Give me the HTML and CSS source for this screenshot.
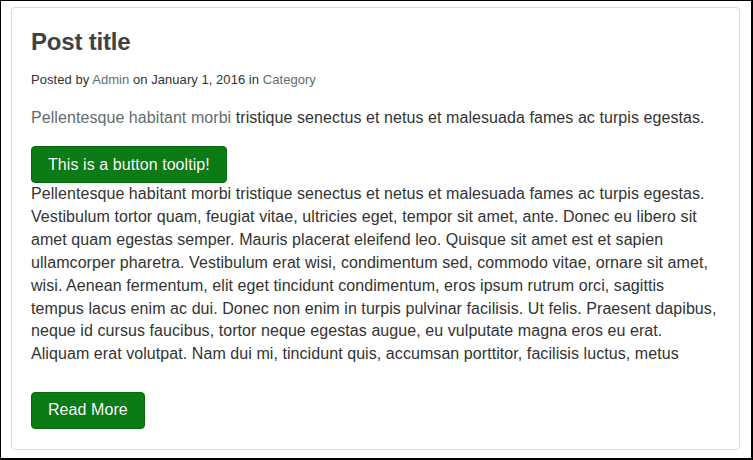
FILE: index.html
```html
<!DOCTYPE html>
<html>
<head>
<meta charset="utf-8">
<link rel="stylesheet" href="styles.css">
</head>
<body>
<div class="frame">
  <article class="card">
    <h2 class="title">Post title</h2>
    <p class="meta">Posted by <a href="#">Admin</a> on January 1, 2016 in <a href="#">Category</a></p>
    <p class="lead"><a href="#">Pellentesque habitant morbi</a> tristique senectus et netus et malesuada fames ac turpis egestas.</p>
    <button class="btn">This is a button tooltip!</button>
    <p class="body">Pellentesque habitant morbi tristique senectus et netus et malesuada fames ac turpis egestas. Vestibulum tortor quam, feugiat vitae, ultricies eget, tempor sit amet, ante. Donec eu libero sit amet quam egestas semper. Mauris placerat eleifend leo. Quisque sit amet est et sapien ullamcorper pharetra. Vestibulum erat wisi, condimentum sed, commodo vitae, ornare sit amet, wisi. Aenean fermentum, elit eget tincidunt condimentum, eros ipsum rutrum orci, sagittis tempus lacus enim ac dui. Donec non enim in turpis pulvinar facilisis. Ut felis. Praesent dapibus, neque id cursus faucibus, tortor neque egestas augue, eu vulputate magna eros eu erat. Aliquam erat volutpat. Nam dui mi, tincidunt quis, accumsan porttitor, facilisis luctus, metus</p>
    <button class="btn">Read More</button>
  </article>
</div>
</body>
</html>
```

FILE: styles.css
```css
html, body {
  margin: 0;
  padding: 0;
  background: #fff;
}
.frame {
  box-sizing: border-box;
  width: 753px;
  height: 460px;
  border-style: solid;
  border-color: #000;
  border-width: 1px 2px 2px 1px;
  padding: 6px 11px 0 10px;
  overflow: hidden;
  font-family: "Liberation Sans", Arial, sans-serif;
  color: #333;
}
.card {
  border: 1px solid #dcdcdc;
  border-radius: 4px;
  padding: 21px 19px 20px 19px;
}
.title {
  margin: 0 0 16px;
  font-size: 24px;
  line-height: 1.1;
  font-weight: bold;
  color: #3d4244;
  letter-spacing: -0.2px;
}
.meta {
  margin: 0 0 17px;
  font-size: 13px;
  line-height: 1.42857;
  color: #333;
  letter-spacing: 0.05px;
}
a {
  color: #5f6d6e;
  text-decoration: none;
}
.lead {
  margin: 0 0 16.5px;
  font-size: 16px;
  line-height: 22.86px;
  letter-spacing: 0.07px;
}
.body {
  margin: 0 0 25.5px;
  font-size: 16px;
  line-height: 22.86px;
  letter-spacing: 0.07px;
}
.btn {
  display: block;
  box-sizing: border-box;
  height: 37px;
  margin: 0;
  padding: 0 16px;
  background: #0b7c15;
  border: 1px solid #086a10;
  border-radius: 4px;
  color: #fff;
  font-family: "Liberation Sans", Arial, sans-serif;
  font-size: 16px;
  line-height: 22px;
  letter-spacing: 0.07px;
  text-shadow: 0 0 1px rgba(0, 0, 0, 0.35);
}
```
